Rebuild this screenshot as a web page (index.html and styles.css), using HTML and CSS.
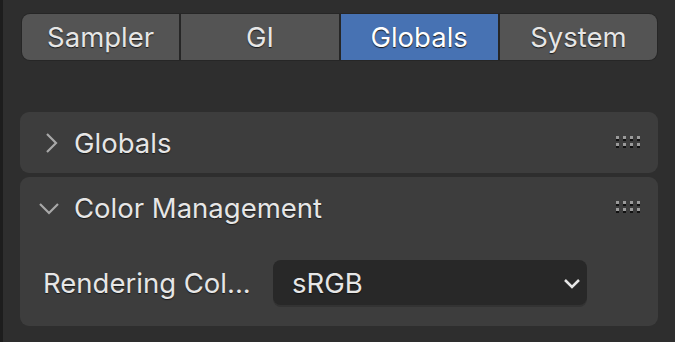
FILE: index.html
```html
<!DOCTYPE html>
<html lang="en">
<head>
  <meta charset="UTF-8" />
  <title>Render Properties</title>
  <link rel="stylesheet" href="styles.css">
</head>
<body>
  <div class="edge"></div>

  <div class="main">
    <div class="tabs">
      <div class="tab">Sampler</div>
      <div class="tab">GI</div>
      <div class="tab active">Globals</div>
      <div class="tab">System</div>
    </div>

    <div class="panel">
      <div class="panel-head">
        <svg class="arrow" width="14" height="22" viewBox="0 0 14 22">
          <path d="M3 2 L12 11 L3 20" fill="none" stroke="#a8a8a8" stroke-width="2.2"/>
        </svg>
        <span class="title">Globals</span>
        <svg class="grip" width="27" height="13" viewBox="0 0 27 13">
          <g fill="#9a9a9a">
            <rect x="0" y="0" width="3" height="3"/><rect x="7" y="0" width="3" height="3"/>
            <rect x="14" y="0" width="3" height="3"/><rect x="21" y="0" width="3" height="3"/>
            <rect x="0" y="7" width="3" height="3"/><rect x="7" y="7" width="3" height="3"/>
            <rect x="14" y="7" width="3" height="3"/><rect x="21" y="7" width="3" height="3"/>
          </g>
          <g fill="#111">
            <rect x="0" y="3" width="3" height="2"/><rect x="7" y="3" width="3" height="2"/>
            <rect x="14" y="3" width="3" height="2"/><rect x="21" y="3" width="3" height="2"/>
            <rect x="0" y="10" width="3" height="2"/><rect x="7" y="10" width="3" height="2"/>
            <rect x="14" y="10" width="3" height="2"/><rect x="21" y="10" width="3" height="2"/>
          </g>
        </svg>
      </div>
    </div>

    <div class="panel">
      <div class="panel-head open">
        <svg class="arrow" width="22" height="14" viewBox="0 0 22 14">
          <path d="M2 3 L11 12 L20 3" fill="none" stroke="#a8a8a8" stroke-width="2.2"/>
        </svg>
        <span class="title">Color Management</span>
        <svg class="grip" width="27" height="13" viewBox="0 0 27 13">
          <g fill="#9a9a9a">
            <rect x="0" y="0" width="3" height="3"/><rect x="7" y="0" width="3" height="3"/>
            <rect x="14" y="0" width="3" height="3"/><rect x="21" y="0" width="3" height="3"/>
            <rect x="0" y="7" width="3" height="3"/><rect x="7" y="7" width="3" height="3"/>
            <rect x="14" y="7" width="3" height="3"/><rect x="21" y="7" width="3" height="3"/>
          </g>
          <g fill="#111">
            <rect x="0" y="3" width="3" height="2"/><rect x="7" y="3" width="3" height="2"/>
            <rect x="14" y="3" width="3" height="2"/><rect x="21" y="3" width="3" height="2"/>
            <rect x="0" y="10" width="3" height="2"/><rect x="7" y="10" width="3" height="2"/>
            <rect x="14" y="10" width="3" height="2"/><rect x="21" y="10" width="3" height="2"/>
          </g>
        </svg>
      </div>

      <div class="row">
        <span class="label">Rendering Col...</span>
        <div class="select">
          <span>sRGB</span>
          <svg width="18" height="12" viewBox="0 0 18 12">
            <path d="M2 3 L9 10 L16 3" fill="none" stroke="#e6e6e6" stroke-width="2.5"/>
          </svg>
        </div>
      </div>
    </div>
  </div>
</body>
</html>
```

FILE: styles.css
```css
* {
  margin: 0; padding: 0;
  box-sizing: border-box;
}

body {
  background: #2e2e2e;
  font-family: 'Inter', 'Noto Sans', sans-serif;
  font-size: 27.5px;
  color: #e6e6e6;
  display: flex;
  height: 100vh;
  overflow: hidden;
}

.edge {
  width: 3px;
  background: #1d1d1d;
}

.main {
  flex: 1;
  padding: 13px 17px 0 17px;
}

.tabs {
  display: flex;
  gap: 2px;
  height: 48px;
  margin-left: 1px;
  padding: 1px;
  background: #262626;
  border-radius: 9px;
  margin-bottom: 51px;
}

.tab {
  flex: 1;
  display: flex;
  align-items: center;
  justify-content: center;
  background: #545454;
  text-shadow: 0 1px 1px #1a1a1a;
}

.tab:first-child { border-radius: 8px 0 0 8px; }
.tab:last-child { border-radius: 0 8px 8px 0; }

.tab.active {
  background: #4772b3;
  color: #fff;
}

.panel {
  background: #3d3d3d;
  border-radius: 9px;
  margin-bottom: 4px;
}

.panel-head {
  display: flex;
  align-items: center;
  height: 61px;
  padding: 0 15px 0 24px;
}

.panel-head .arrow {
  margin-right: 16px;
}

.panel-head.open {
  padding-left: 18px;
}

.panel-head.open .arrow {
  margin-right: 14px;
}

.title {
  flex: 1;
  text-shadow: 0 1px 1px #1a1a1a;
}

.grip {
  display: block;
}

.row {
  display: flex;
  align-items: center;
  padding: 22px 71px 21px 23px;
}

.label {
  width: 230px;
  text-shadow: 0 1px 1px #1a1a1a;
}

.select {
  flex: 1;
  display: flex;
  align-items: center;
  justify-content: space-between;
  height: 45px;
  padding: 0 6px 0 19px;
  background: #282828;
  border-radius: 8px;
  box-shadow: 0 2px 0 #333;
  text-shadow: 0 1px 1px #111;
}
```
